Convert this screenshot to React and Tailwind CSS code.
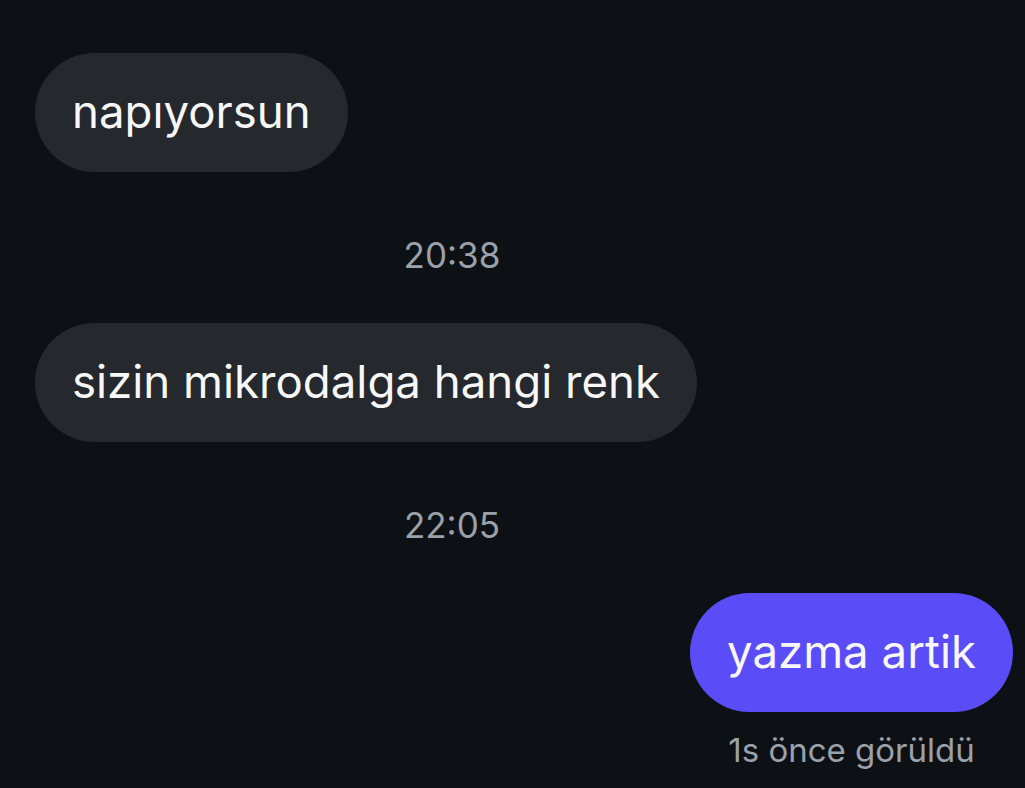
export default function App() {
    return (
        <div
            className="w-[1025px] h-[788px] overflow-hidden bg-[#0d1014] flex flex-col pt-[53px]"
            style={{ fontFamily: "Inter, 'Noto Sans', sans-serif" }}
        >
            {/* incoming */}
            <div className="pl-[35px] flex">
                <div className="h-[119px] rounded-full bg-[#25282d] px-[37px] flex items-center text-[45.6px] text-[#f7f7f8]">
                    napıyorsun
                </div>
            </div>

            <div className="w-[904px] text-center text-[35px] text-[#9ba1aa] mt-[63px] leading-[40px]">20:38</div>

            <div className="pl-[35px] flex mt-[48px]">
                <div className="h-[119px] rounded-full bg-[#25282d] px-[37px] flex items-center text-[45.6px] text-[#f7f7f8]">
                    sizin mikrodalga hangi renk
                </div>
            </div>

            <div className="w-[904px] text-center text-[35px] text-[#9ba1aa] mt-[63px] leading-[40px]">22:05</div>

            {/* outgoing */}
            <div className="flex flex-col items-end pr-[12px] mt-[48px]">
                <div className="flex flex-col items-center">
                    <div className="h-[119px] rounded-full bg-[#5a4cf6] px-[37px] flex items-center text-[45.6px] text-[#f7f7f8]">
                        yazma artik
                    </div>
                    <div className="mt-[18px] text-[33px] leading-[40px] text-[#9ba1aa]">1s önce görüldü</div>
                </div>
            </div>
        </div>
    );
}
